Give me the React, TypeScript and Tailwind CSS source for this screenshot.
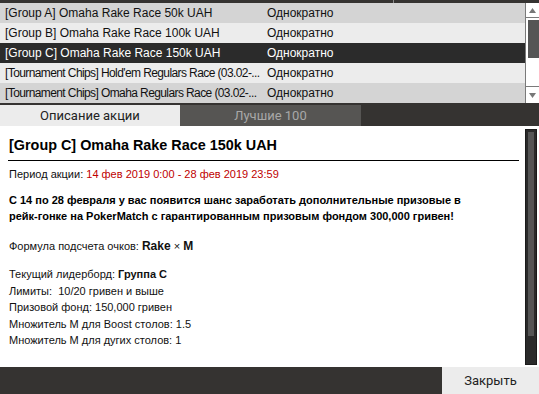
import React from "react";

const rows = [
  { name: "[Group A] Omaha Rake Race 50k UAH", bg: "bg-[#d4d4d4]", text: "text-[#111]", tight: false },
  { name: "[Group B] Omaha Rake Race 100k UAH", bg: "bg-[#ececec]", text: "text-[#111]", tight: false },
  { name: "[Group C] Omaha Rake Race 150k UAH", bg: "bg-[#2b2b2b]", text: "text-white", tight: false },
  { name: "[Tournament Chips] Hold'em Regulars Race (03.02-...", bg: "bg-[#ececec]", text: "text-[#111]", tight: true },
  { name: "[Tournament Chips] Omaha Regulars Race (03.02-...", bg: "bg-[#d4d4d4]", text: "text-[#111]", tight: true },
];

export default function App() {
  return (
    <div className="w-[539px] h-[394px] bg-[#353331] flex flex-col overflow-hidden font-['Liberation_Sans',Arial,sans-serif]">
      {/* header strip */}
      <div className="h-[3px] flex shrink-0">
        <div className="w-[393px] bg-[#353331]" />
        <div className="w-[1px] bg-[#8a8a8a]" />
        <div className="flex-1 bg-[#353331]" />
      </div>
      {/* list */}
      <div className="h-[100px] flex shrink-0">
        <div className="flex-1 flex flex-col">
          {rows.map((r) => (
            <div key={r.name} className={`h-[20px] flex items-center text-[12px] ${r.bg} ${r.text}`}>
              <div className={`w-[266px] pl-[5px] whitespace-nowrap overflow-hidden ${r.tight ? "tracking-[-0.6px]" : ""}`}>{r.name}</div>
              <div className="pl-[1px]">Однократно</div>
            </div>
          ))}
        </div>
        <div className="w-[14px] bg-white border-l border-[#7a7a7a] flex flex-col">
          <div className="h-[15px] border-b border-[#7a7a7a] flex items-center justify-center">
            <svg width="7" height="5" viewBox="0 0 7 5"><path d="M3.5 0 L7 5 L0 5 Z" fill="#777" /></svg>
          </div>
          <div className="flex-1 pt-[2px] pl-[2px]">
            <div className="h-[38px] bg-[#555555]" />
          </div>
          <div className="h-[17px] border-t border-[#7a7a7a] flex items-center justify-center">
            <svg width="7" height="5" viewBox="0 0 7 5"><path d="M0 0 L7 0 L3.5 5 Z" fill="#777" /></svg>
          </div>
        </div>
      </div>
      <div className="h-[2px] shrink-0" />
      {/* tabs */}
      <div className="h-[21px] flex shrink-0 text-[13px] font-['Roboto',sans-serif]">
        <div className="w-[180px] bg-[#ececec] text-[#222] flex items-center justify-center">Описание акции</div>
        <div className="w-[181px] bg-[#565553] text-[#a8a8a8] flex items-center justify-center">Лучшие 100</div>
        <div className="flex-1" />
      </div>
      {/* content */}
      <div className="flex-1 bg-white flex">
        <div className="flex-1 pl-[9px] pr-[6px] pt-[11px] text-[11px] text-[#111]">
          <div className="text-[14.4px] font-bold leading-[17px] text-black">[Group C] Omaha Rake Race 150k UAH</div>
          <div className="h-[1px] bg-black mt-[6px] ml-[-1px]" />
          <div className="mt-[5px] leading-[16px]">
            Период акции: <span className="text-[#c00000]">14 фев 2019 0:00 - 28 фев 2019 23:59</span>
          </div>
          <div className="mt-[10px] font-bold text-[11px] leading-[16px] text-black">
            С 14 по 28 февраля у вас появится шанс заработать дополнительные призовые в
            <br />
            рейк-гонке на PokerMatch с гарантированным призовым фондом 300,000 гривен!
          </div>
          <div className="mt-[14px] leading-[16px]">
            Формула подсчета очков: <span className="font-bold text-[12px]">Rake</span> × <span className="font-bold text-[12px]">M</span>
          </div>
          <div className="mt-[12px] leading-[16.5px]">
            <div className="h-[16.5px]">Текущий лидерборд: <span className="font-bold">Группа C</span></div>
            <div className="h-[16.5px]">Лимиты:&nbsp; 10/20 гривен и выше</div>
            <div className="h-[16.5px]">Призовой фонд: 150,000 гривен</div>
            <div className="h-[16.5px]">Множитель M для Boost столов: 1.5</div>
            <div className="h-[16.5px]">Множитель M для дугих столов: 1</div>
          </div>
        </div>
        <div className="w-[14px] pt-[3px] pb-[2px] flex">
          <div className="w-[12px] bg-[#2a2a2a] border border-[#1a1a1a] p-[2px] pb-[28px]">
            <div className="h-full bg-[#555555]" />
          </div>
        </div>
      </div>
      {/* bottom */}
      <div className="h-[27px] flex shrink-0">
        <div className="flex-1" />
        <div className="w-[97px] bg-[#ececec] flex items-center justify-center text-[13px] text-[#222] font-['Roboto',sans-serif] pt-[1px]">
          Закрыть
        </div>
      </div>
    </div>
  );
}
